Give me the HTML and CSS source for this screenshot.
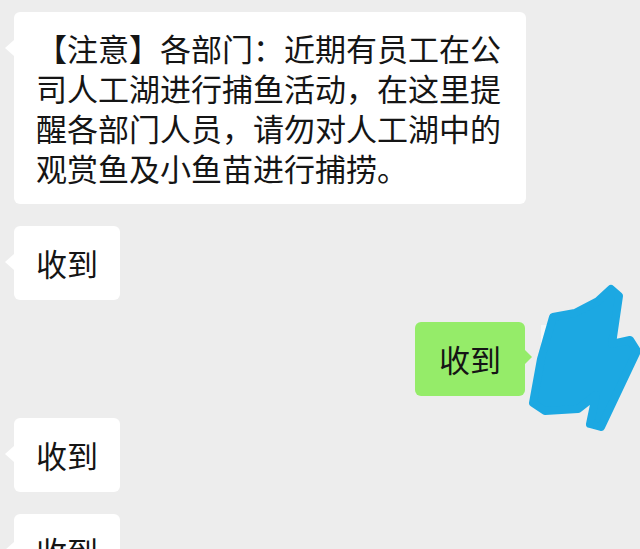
FILE: index.html
```html
<!DOCTYPE html>
<html>
<head>
    <title>群聊</title>
    <meta charset="utf-8">
    <link rel="stylesheet" href="styles.css">
</head>
<body>
    <div class="chat">
        <div class="msg msg-left">
            <div class="bubble bubble-long">【注意】各部门：近期有员工在公司人工湖进行捕鱼活动，在这里提醒各部门人员，请勿对人工湖中的观赏鱼及小鱼苗进行捕捞。</div>
        </div>

        <div class="msg msg-left">
            <div class="bubble">收到</div>
        </div>

        <div class="msg msg-right">
            <div class="bubble bubble-me">收到</div>
            <div class="avatar">
                <svg class="scribble" viewBox="530 285 110 150" width="110" height="150">
                    <rect x="541" y="326" width="76" height="70" fill="#f7f7f7"/>
                    <polygon points="553,318 575,314 598,302 611,290 619,297 612,345 630,341 637,352 601,428 590,425 596,396 578,410 545,412 533,404 541,360"
                             fill="#1ca8e2" stroke="#1ca8e2" stroke-width="8" stroke-linejoin="round"/>
                </svg>
            </div>
        </div>

        <div class="msg msg-left">
            <div class="bubble">收到</div>
        </div>

        <div class="msg msg-left">
            <div class="bubble">收到</div>
        </div>
    </div>
</body>
</html>
```

FILE: styles.css
```css
html, body {
    margin: 0;
    height: 100%;
    overflow: hidden;
}
body {
    background-color: #ededed;
    font-family: "Noto Sans CJK SC", "Noto Sans", sans-serif;
    color: #151515;
}
.chat {
    padding: 12px 0 0 14px;
    display: flex;
    flex-direction: column;
    gap: 22px;
}
.msg {
    display: flex;
    align-items: flex-start;
}
.msg-right {
    justify-content: flex-end;
}
.bubble {
    position: relative;
    background: white;
    border-radius: 6px;
    padding: 17px 22px;
    font-size: 31px;
    line-height: 40px;
    box-sizing: border-box;
}
.bubble-long {
    max-width: 512px;
    padding-top: 16px;
    padding-bottom: 16px;
}
.msg-left .bubble::before {
    content: "";
    position: absolute;
    left: -9px;
    top: 28px;
    border-style: solid;
    border-width: 8px 9px 8px 0;
    border-color: transparent white transparent transparent;
}
.bubble-me {
    background: #95ec69;
    padding: 17px 24px;
}
.bubble-me::after {
    content: "";
    position: absolute;
    right: -7px;
    top: 28px;
    border-style: solid;
    border-width: 7px 0 7px 7px;
    border-color: transparent transparent transparent #95ec69;
}
.avatar {
    position: relative;
    width: 104px;
    height: 74px;
    margin-left: 11px;
    flex-shrink: 0;
}
.scribble {
    position: absolute;
    left: -6px;
    top: -38px;
    overflow: visible;
}
```
